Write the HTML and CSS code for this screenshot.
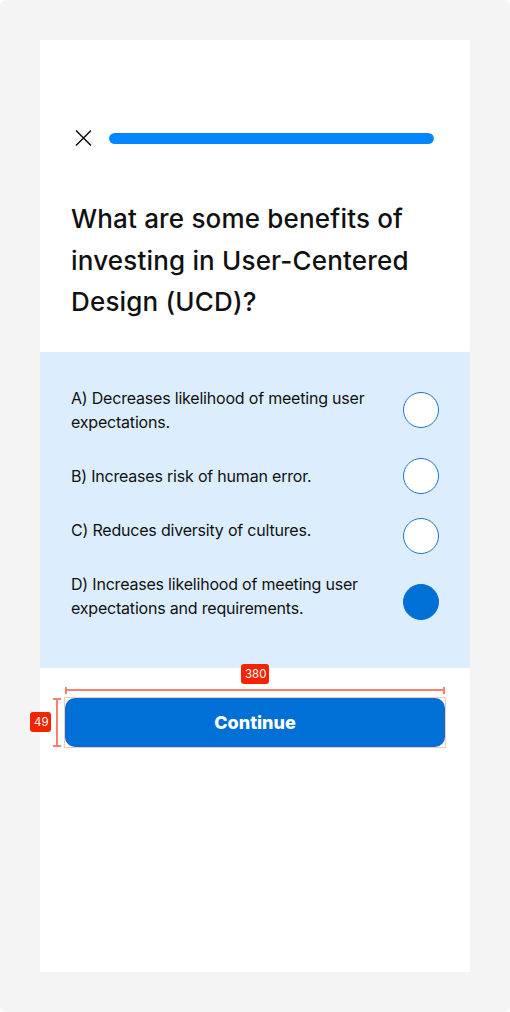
FILE: index.html
```html
<!DOCTYPE html>
<html lang="en">
<head>
  <meta charset="UTF-8">
  <title>Quiz</title>
  <link rel="stylesheet" href="styles.css">
</head>
<body>

<div class="frame">
  <div class="screen">
    <div class="top-bar">
      <svg class="close" width="17" height="16" viewBox="0 0 17 16">
        <path d="M1 0.5 L16 15.5 M16 0.5 L1 15.5" stroke="#111" stroke-width="1.5" fill="none"/>
      </svg>
      <div class="progress"><div class="progress-fill"></div></div>
    </div>

    <h1 class="question">What are some benefits of investing in User-Centered Design (UCD)?</h1>

    <div class="answers">
      <div class="answer">
        <span class="answer-text">A) Decreases likelihood of meeting user expectations.</span>
        <span class="radio"></span>
      </div>
      <div class="answer">
        <span class="answer-text">B) Increases risk of human error.</span>
        <span class="radio"></span>
      </div>
      <div class="answer answer-top">
        <span class="answer-text">C) Reduces diversity of cultures.</span>
        <span class="radio"></span>
      </div>
      <div class="answer answer-bottom">
        <span class="answer-text">D) Increases likelihood of meeting user expectations and requirements.</span>
        <span class="radio checked"></span>
      </div>
    </div>

    <div class="cta">
      <button class="continue">Continue</button>
      <!-- measurement overlay -->
      <div class="measure-box"></div>
      <div class="measure-w"></div>
      <span class="tag tag-w">380</span>
      <div class="measure-h"></div>
      <span class="tag tag-h">49</span>
    </div>
  </div>
</div>

</body>
</html>
```

FILE: styles.css
```css
body { margin: 0; background: #fff; font-family: Inter, "Noto Sans", sans-serif; color: #111; }
.frame { width: 510px; height: 1012px; background: #f4f4f4; border-radius: 6px; padding: 40px; box-sizing: border-box; }
.screen { width: 430px; height: 932px; background: #fff; }

.top-bar { display: flex; align-items: center; gap: 17px; height: 24px; padding: 86px 36px 0 35px; }
.close { flex: none; }
.progress { flex: 1; height: 11px; border-radius: 6px; background: #dcedfd; overflow: hidden; }
.progress-fill { width: 100%; height: 100%; background: #0586ff; border-radius: 6px; }

.question { margin: 48px 31px 0; font-size: 26px; line-height: 41.6px; font-weight: 500; letter-spacing: 0.18px; }

.answers { margin-top: 29px; background: #dceefe; padding: 34px 31px 48px; display: flex; flex-direction: column; }
.answer { display: flex; align-items: center; gap: 16px; margin-bottom: 24px; }
.answer:nth-child(3) { margin-bottom: 18px; }
.answer:last-child { margin-bottom: 0; }
.answer-top { align-items: flex-start; }
.answer-bottom { align-items: flex-end; }
.answer-text { flex: 1; font-size: 16px; line-height: 24px; letter-spacing: -0.2px; }
.radio { flex: none; width: 36px; height: 36px; border-radius: 50%; box-sizing: border-box; border: 1.5px solid #1b73d9; background: #fff; }
.radio.checked { background: #006fd6; border-color: #006fd6; }

.cta { position: relative; margin: 30px 25px 0; }
.continue { display: block; width: 380px; height: 49px; border: none; border-radius: 10px; background: #006fd6; color: #fff; font-family: Inter, sans-serif; font-size: 18px; font-weight: 800; padding: 1px 0 0; cursor: pointer; }

.measure-box { position: absolute; left: -1px; top: -1px; width: 380px; height: 49px; border: 1px solid #f9c7bf; pointer-events: none; }
.measure-w { position: absolute; left: 0; top: -11px; width: 380px; height: 7px; border-left: 2px solid #f3826f; border-right: 2px solid #f3826f; box-sizing: border-box; }
.measure-w::after { content: ""; position: absolute; left: 0; right: 0; top: 2.5px; border-top: 2px solid #f3826f; }
.measure-h { position: absolute; left: -12px; top: 0; width: 8px; height: 49px; border-top: 2px solid #f3826f; border-bottom: 2px solid #f3826f; box-sizing: border-box; }
.measure-h::after { content: ""; position: absolute; top: 0; bottom: 0; left: 3px; border-left: 2px solid #f3826f; }
.tag { position: absolute; height: 20px; line-height: 20px; padding: 0 4px; border-radius: 3px; background: #f52300; color: #fff; font-size: 11.5px; font-family: Inter, sans-serif; text-align: center; }
.tag-w { left: 176px; top: -34px; width: 20px; }
.tag-h { left: -35px; top: 14px; width: 13px; }
```
